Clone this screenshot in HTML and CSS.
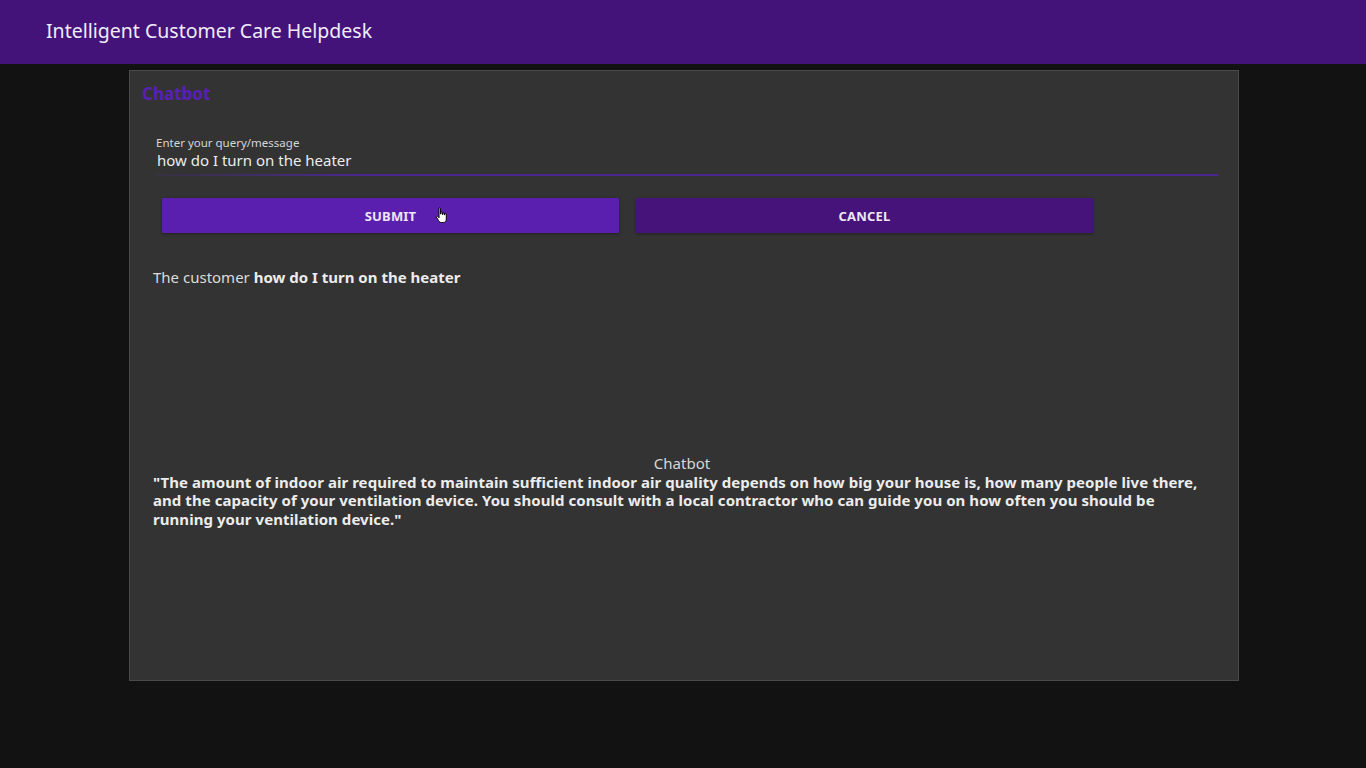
FILE: index.html
```html
<!DOCTYPE html>
<html>
<head>
<meta charset="utf-8">
<link rel="stylesheet" href="styles.css">
</head>
<body>
<header class="appbar">
  <h1 class="appbar-title">Intelligent Customer Care Helpdesk</h1>
</header>
<main class="page">
  <section class="card">
    <h2 class="card-title">Chatbot</h2>
    <div class="field">
      <label class="field-label">Enter your query/message</label>
      <div class="field-value">how do I turn on the heater</div>
      <div class="field-line"></div>
    </div>
    <div class="actions">
      <button class="btn btn-submit">SUBMIT
        <svg class="cursor" width="14" height="17" viewBox="0 0 14 17"><path d="M4 1.5c0-.8 1.5-.8 1.5 0V7h.5V5.5c0-.8 1.5-.8 1.5 0V7.5h.5V6.5c0-.8 1.5-.8 1.5 0V8h.3V7.2c0-.8 1.5-.8 1.5 0V12c0 2-1 3.5-3 3.5H6.5c-1.500 0-2.200-.8-3-2L1.300 10c-.5-.8.600-1.600 1.200-.9L4 10.8z" fill="#fff" stroke="#000" stroke-width="1"/></svg>
      </button>
      <button class="btn btn-cancel">CANCEL</button>
    </div>
    <p class="query">The customer <strong>how do I turn on the heater</strong></p>
    <div class="answer">
      <div class="answer-who">Chatbot</div>
      <p class="answer-text">"The amount of indoor air required to maintain sufficient indoor air quality depends on how big your house is, how many people live there, and the capacity of your ventilation device. You should consult with a local contractor who can guide you on how often you should be running your ventilation device."</p>
    </div>
  </section>
</main>
</body>
</html>
```
FILE: styles.css
```css
* { box-sizing: border-box; }
html, body { margin: 0; padding: 0; }
body {
  background: #121212;
  font-family: "Noto Sans", "Open Sans", sans-serif;
  color: #e6e6e6;
  width: 1366px;
  height: 768px;
  overflow: hidden;
}
.appbar {
  height: 64px;
  background: #43137a;
  display: flex;
  align-items: center;
  padding-left: 46px;
  padding-bottom: 3px;
}
.appbar-title {
  margin: 0;
  font-weight: 400;
  font-size: 19.5px;
  color: #f0ecf6;
}
.page {
  padding-top: 6px;
  padding-left: 129px;
}
.card {
  width: 1110px;
  height: 611px;
  background: #333333;
  border: 1px solid #4a4a4a;
  padding: 12px 20px 0 12px;
  position: relative;
}
.card-title {
  margin: 0;
  font-size: 17px;
  font-weight: 700;
  color: #5a1fb8;
  line-height: 22px;
}
.field {
  margin: 30px 0 0 14px;
  width: 1062px;
}
.field-label {
  display: block;
  font-size: 11.5px;
  color: #d6d6d6;
  line-height: 15px;
}
.field-value {
  font-size: 15px;
  line-height: 20px;
  color: #ececec;
  padding-left: 1px;
}
.field-line {
  height: 2px;
  margin-top: 4px;
  background: linear-gradient(to right, rgba(80,40,150,0.15) 0%, #4b2890 20%, #4b2890 100%);
}
.actions {
  display: flex;
  gap: 17px;
  margin: 22px 0 0 20px;
}
.btn {
  width: 457px;
  height: 35px;
  border: none;
  border-radius: 1px;
  font-family: inherit;
  font-size: 13px;
  font-weight: 700;
  color: #ece6f6;
  letter-spacing: 0.2px;
  position: relative;
  box-shadow: 0 1px 3px rgba(0,0,0,0.35);
}
.btn-submit { background: #5b1fb0; }
.btn-cancel { background: #45137a; }
.cursor {
  position: absolute;
  left: 273px;
  top: 9px;
}
.query {
  margin: 34px 0 0 11px;
  font-size: 15px;
  line-height: 20px;
  color: #dcdcdc;
}
.query strong { color: #ececec; }
.answer {
  margin: 166px 0 0 11px;
  width: 1058px;
}
.answer-who {
  text-align: center;
  font-size: 15px;
  line-height: 20px;
  color: #d8d8d8;
}
.answer-text {
  margin: 0;
  font-size: 15px;
  font-weight: 700;
  letter-spacing: 0.05px;
  line-height: 18.3px;
  color: #ececec;
}
```
